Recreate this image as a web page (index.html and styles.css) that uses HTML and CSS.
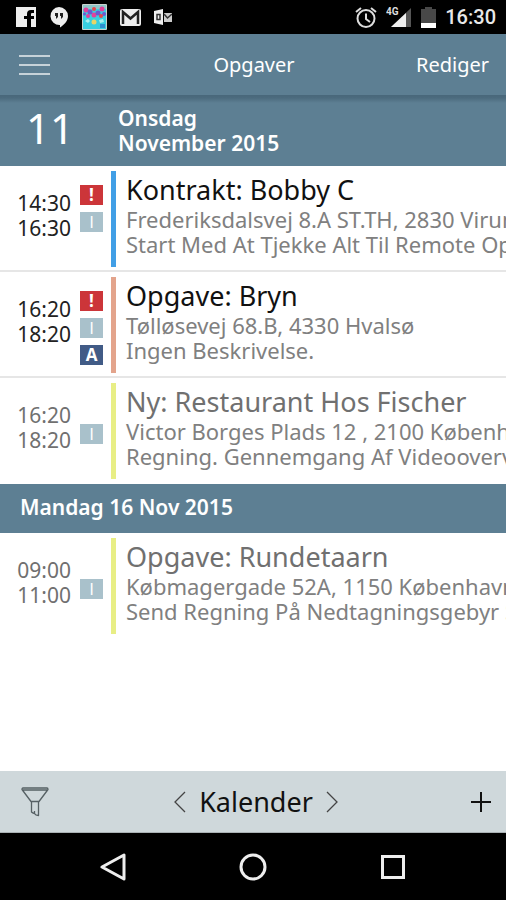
FILE: index.html
```html
<!DOCTYPE html>
<html lang="da">
<head>
  <meta charset="UTF-8">
  <meta name="viewport" content="width=device-width, initial-scale=1.0">
  <title>Opgaver</title>
  <link rel="stylesheet" href="styles.css">
</head>
<body>
  <div class="statusbar">
    <svg width="20" height="20" viewBox="0 0 20 20"><path fill="#eee" d="M0 0h20v20h-5v-8h3V9h-3V7q0-1 1-1h2V3h-3q-4 0-4 4v2H8v3h3v8H0z"/></svg>
    <svg width="20" height="21" viewBox="0 0 20 21"><path fill="#eee" d="M10 0a9 9 0 0 1 9 9c0 5-4 9-8 11.500V18A9 9 0 1 1 10 0z"/><path fill="#222" d="M6 6h3v4l-2 2V9H6zM11 6h3v4l-2 2V9h-1z"/></svg>
    <svg class="game" width="25" height="26" viewBox="0 0 25 26">
      <rect width="25" height="26" rx="1" fill="#c9d3cf"/>
      <rect x="1" y="1" width="23" height="24" fill="#38cfe0"/>
      <rect x="1" y="1" width="23" height="4" fill="#8fc6c8"/>
      <g fill="#e2409c"><circle cx="4" cy="6" r="2.500"/><circle cx="20" cy="5" r="2.500"/><circle cx="12" cy="11" r="2.500"/><circle cx="6" cy="12" r="2"/></g>
      <g fill="#6c58cf"><circle cx="8" cy="8" r="2.500"/><circle cx="16" cy="9" r="2.500"/><circle cx="22" cy="10" r="2"/><circle cx="2.500" cy="10" r="1.500"/></g>
      <g fill="#e5484d"><circle cx="12" cy="5" r="2"/><circle cx="19" cy="12" r="2"/></g>
      <path fill="#a8f0ee" d="M3 17l3-2 2 2-2 2zM17 16l4-1 1 3-4 1z"/>
      <circle cx="12" cy="18" r="2.500" fill="#e8d667"/>
      <path fill="#2f8fd0" d="M18 20h5v4h-5z"/>
    </svg>
    <svg width="21" height="17" viewBox="0 0 21 17"><rect width="21" height="17" rx="2" fill="#eee"/><path fill="none" stroke="#222" stroke-width="2.500" d="M3 15V3l7.500 6.500L18 3v12"/></svg>
    <svg width="18" height="16" viewBox="0 0 18 16"><path fill="#eee" d="M0 2l9-2v16l-9-2z"/><path fill="#ccc" d="M10 4h8v9h-8z"/><path fill="none" stroke="#333" stroke-width="1.500" d="M3 5.500h3v5H3zM10 5l3.500 4L18 5"/></svg>
    <div class="system">
      <svg width="22" height="21" viewBox="0 0 22 21"><g fill="none" stroke="#ddd" stroke-width="2"><circle cx="11" cy="11.500" r="8.500"/><path d="M11 6.500v5.500l4 3M1 5l5-4M21 5l-5-4"/></g></svg>
      <svg width="26" height="21" viewBox="0 0 26 21"><path fill="#555" d="M25 1v19H5z"/><path fill="#eee" d="M20 6v14H5z"/><text class="network" x="0" y="8">4G</text></svg>
      <svg width="15" height="21" viewBox="0 0 15 21"><path fill="#484848" d="M4 0h7v2h4v14H0V2h4z"/><path fill="#fff" d="M0 16h15v5H0z"/></svg>
      <span class="clock">16:30</span>
    </div>
  </div>

  <header class="header">
    <button class="menu" aria-label="Menu"><span></span><span></span><span></span></button>
    <h1>Opgaver</h1>
    <button class="edit">Rediger</button>
  </header>

  <main class="list">
    <div class="today">
      <div class="day">11</div>
      <h2>Onsdag<br>November 2015</h2>
    </div>

    <article class="task">
      <div class="time">14:30<br>16:30</div>
      <div class="badges"><span class="badge red">!</span><span class="badge info">I</span></div>
      <div class="text blue">
        <h3>Kontrakt: Bobby C</h3>
        <p>Frederiksdalsvej 8.A ST.TH, 2830 Virum</p>
        <p>Start Med At Tjekke Alt Til Remote Op</p>
      </div>
    </article>
    <article class="task">
      <div class="time">16:20<br>18:20</div>
      <div class="badges"><span class="badge red">!</span><span class="badge info">I</span><span class="badge navy">A</span></div>
      <div class="text orange">
        <h3>Opgave: Bryn</h3>
        <p>Tølløsevej 68.B, 4330 Hvalsø</p>
        <p>Ingen Beskrivelse.</p>
      </div>
    </article>
    <article class="task done">
      <div class="time">16:20<br>18:20</div>
      <div class="badges"><span class="badge"></span><span class="badge info">I</span></div>
      <div class="text yellow">
        <h3>Ny: Restaurant Hos Fischer</h3>
        <p>Victor Borges Plads 12 , 2100 Københ</p>
        <p>Regning. Gennemgang Af Videooverv</p>
      </div>
    </article>

    <h2 class="date">Mandag 16 Nov 2015</h2>

    <article class="task done">
      <div class="time">09:00<br>11:00</div>
      <div class="badges"><span class="badge"></span><span class="badge info">I</span></div>
      <div class="text yellow">
        <h3>Opgave: Rundetaarn</h3>
        <p>Købmagergade 52A, 1150 København</p>
        <p>Send Regning På Nedtagningsgebyr S</p>
      </div>
    </article>
  </main>

  <footer class="toolbar">
    <button class="filter" aria-label="Filter"><svg width="28" height="30" viewBox="0 0 28 30"><path fill="none" stroke="#566064" stroke-width="1.300" stroke-linejoin="round" d="M2 1h24q1 0 1 1.500L18 14.500H10L1 2.500Q1 1 2 1zM2 3h24M10.500 14.500V25q1 1 3 1.500 1 2 4 2V14.500M13.500 26.500V24"/></svg></button>
    <div class="calendar">
      <button aria-label="Forrige"><svg width="12" height="22" viewBox="0 0 12 22"><path fill="none" stroke="#444" stroke-width="1.300" d="M11 1L1 11l10 10"/></svg></button>
      <button class="name">Kalender</button>
      <button aria-label="Næste"><svg width="12" height="22" viewBox="0 0 12 22"><path fill="none" stroke="#444" stroke-width="1.300" d="M1 1l10 10L1 21"/></svg></button>
    </div>
    <button class="add" aria-label="Tilføj"><svg width="20" height="20" viewBox="0 0 20 20"><path stroke="#111" stroke-width="2" d="M10 0v20M0 10h20"/></svg></button>
  </footer>

  <nav class="navbar">
    <button aria-label="Tilbage"><svg width="28" height="28" viewBox="0 0 28 28"><path fill="none" stroke="#eee" stroke-width="3" stroke-linejoin="round" d="M25 2v24L3 14z"/></svg></button>
    <button aria-label="Hjem"><svg width="28" height="28" viewBox="0 0 28 28"><circle cx="14" cy="14" r="12" fill="none" stroke="#eee" stroke-width="3"/></svg></button>
    <button aria-label="Oversigt"><svg width="28" height="28" viewBox="0 0 28 28"><rect x="3.500" y="3.500" width="21" height="21" fill="none" stroke="#eee" stroke-width="3"/></svg></button>
  </nav>
</body>
</html>
```

FILE: styles.css
```css
*{
  box-sizing: border-box;
}
body{
  margin: 0;
  min-height: 100vh;
  display: flex;
  flex-direction: column;
  background-color: white;
  font-family: "Noto Sans", sans-serif;
}
h1, h2, h3, p{
  margin: 0;
}
button{
  padding: 0;
  border: none;
  background: none;
  color: inherit;
  font-family: inherit;
}
svg{
  display: block;
}
.statusbar{
  display: flex;
  align-items: center;
  gap: 13px;
  height: 34px;
  padding: 0 10px 0 16px;
  background-color: black;
  color: #e8e8e8;
}
.system{
  display: flex;
  align-items: center;
  gap: 9px;
  margin-left: auto;
}
.network{
  font: bold 10px Roboto, sans-serif;
  fill: #ddd;
}
.clock{
  font: 500 20px Roboto, sans-serif;
}
.header{
  display: grid;
  grid-template-columns: 1fr auto 1fr;
  align-items: center;
  height: 61px;
  padding: 0 17px 0 19px;
  background-color: #5d7f93;
  color: white;
}
.header h1{
  font-size: 20px;
  font-weight: 400;
}
.menu{
  display: grid;
  gap: 7px;
  width: 31px;
}
.menu span{
  height: 2px;
  background-color: #c6d2d9;
}
.edit{
  justify-self: end;
  font-size: 20px;
}
.list{
  flex: 1;
}
.today{
  display: flex;
  align-items: center;
  height: 71px;
  background: linear-gradient(#48677a, #4c6b7e 3px, #5d7f93 8px);
  color: white;
}
.today .day{
  width: 118px;
  padding-right: 18px;
  text-align: center;
  font-size: 42px;
  line-height: 66px;
  padding-bottom: 5px;
}
.today h2{
  font-size: 21px;
  font-weight: 600;
  line-height: 25px;
}
.date{
  padding: 0 20px 3px;
  background-color: #5d7f93;
  color: white;
  font-size: 21px;
  font-weight: 600;
  line-height: 46px;
}
.task{
  display: flex;
  padding: 5px 0 3px;
  border-bottom: 2px solid #e6e6e6;
}
.task.done{
  border-bottom-color: white;
}
.time{
  width: 80px;
  padding: 20px 9px 0 0;
  text-align: right;
  font-size: 21px;
  line-height: 25px;
  color: #222;
}
.badges{
  display: flex;
  flex-direction: column;
  gap: 7px;
  width: 31px;
  padding-top: 14px;
}
.badge{
  width: 23px;
  height: 20px;
  color: white;
  text-align: center;
  font-family: "Open Sans", sans-serif;
  font-size: 17px;
  font-weight: 700;
  line-height: 19px;
}
.badge.red{
  background-color: #cc3539;
}
.badge.info{
  background-color: #a9c1cb;
  font-weight: 400;
}
.badge.navy{
  background-color: #415b86;
}
.text{
  flex: 1;
  min-width: 0;
  height: 96px;
  padding: 2px 0 0 10px;
  border-left: 5px solid;
  white-space: nowrap;
  overflow: hidden;
}
.text.blue{
  border-color: #419fe6;
}
.text.orange{
  border-color: #e3a48c;
}
.text.yellow{
  border-color: #e8ee85;
}
.text h3{
  font-size: 27px;
  font-weight: 400;
  line-height: 34px;
  color: #111;
}
.text p{
  font-size: 22px;
  line-height: 25px;
  color: #808080;
}
.done .time, .done .text h3{
  color: #707070;
}
.toolbar{
  display: grid;
  grid-template-columns: 1fr auto 1fr;
  align-items: center;
  height: 62px;
  padding: 0 15px 0 21px;
  background-color: #cfd8db;
  border-bottom: 1px solid #aab1b4;
}
.filter{
  justify-self: start;
}
.calendar{
  display: flex;
  align-items: center;
  gap: 13px;
}
.calendar .name{
  font-size: 27px;
  color: #111;
}
.add{
  justify-self: end;
}
.navbar{
  display: flex;
  justify-content: center;
  gap: 112px;
  height: 67px;
  background-color: black;
}
```
